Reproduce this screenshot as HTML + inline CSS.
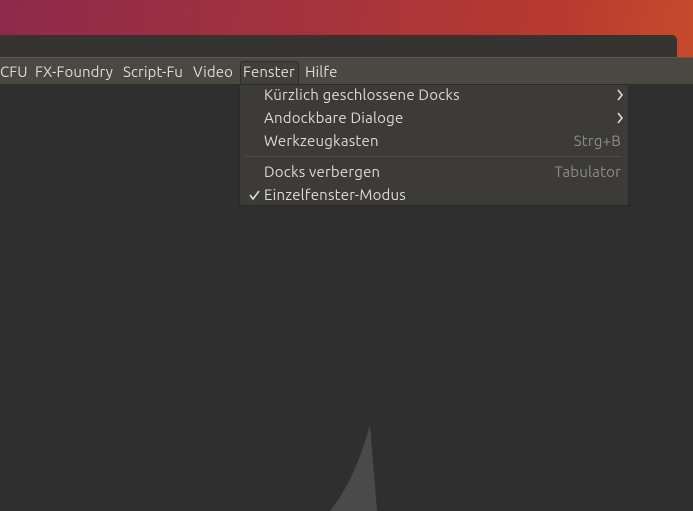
<!DOCTYPE html>
<html><head><style>
body{margin:0;width:693px;height:511px;overflow:hidden;background:#2f2f2f;font-family:"Ubuntu","Liberation Sans",sans-serif;position:relative}
#desk{position:absolute;left:0;top:0;width:693px;height:60px;background:linear-gradient(100deg,#8e2a4c 0%,#a2323f 40%,#b83a30 80%,#c64a2c 100%)}
#title{position:absolute;left:0;top:35px;width:677px;height:25px;background:#353430;border-radius:0 5px 0 0}
#menubar{position:absolute;left:0;top:57px;width:693px;height:27px;background:#4a4841;border-top:1px solid #5a5850;box-sizing:border-box}
.mi{position:absolute;top:5px;font-size:15px;letter-spacing:0.1px;color:#dfdbd2}
#fen{position:absolute;left:240px;top:3px;width:59px;height:23px;background:#403f3a;border:1px solid #2e2d29;border-bottom:none;border-radius:3px 3px 0 0;box-sizing:border-box}
#menu{position:absolute;left:239px;top:84px;width:390px;height:122px;background:#3c3b37;border:1px solid #2a2a27;box-sizing:border-box}
.it{position:absolute;left:24px;font-size:15px;letter-spacing:0.2px;color:#dfdbd2}
.acc{position:absolute;right:7px;font-size:15px;letter-spacing:0.2px;color:#8e8c86}
</style></head><body>
<div id="desk"></div>
<div id="title"></div>
<div id="menubar">
<div id="fen"></div>
<span class="mi" style="left:0">CFU</span>
<span class="mi" style="left:35px">FX-Foundry</span>
<span class="mi" style="left:123px">Script-Fu</span>
<span class="mi" style="left:193px">Video</span>
<span class="mi" style="left:243px">Fenster</span>
<span class="mi" style="left:305px">Hilfe</span>
</div>
<div id="menu">
<span class="it" style="top:1px">Kürzlich geschlossene Docks</span>
<span class="it" style="top:24px">Andockbare Dialoge</span>
<span class="it" style="top:47px">Werkzeugkasten</span><span class="acc" style="top:47px">Strg+B</span>
<div style="position:absolute;left:5px;right:7px;top:71px;height:1px;background:#4d4c47"></div>
<span class="it" style="top:78px">Docks verbergen</span><span class="acc" style="top:78px">Tabulator</span>
<span class="it" style="top:101px">Einzelfenster-Modus</span>
<svg style="position:absolute;left:0;top:0" width="390" height="122" fill="none" stroke="#dfdbd2" stroke-width="1.6">
<path d="M378 5 L382 10 L378 15"/>
<path d="M378 28 L382 33 L378 38"/>
<path d="M10 110 L13 114 L19 106"/>
</svg>
</div>
<svg style="position:absolute;left:0;top:0" width="693" height="511"><path d="M370 425 Q355 480 330 511 L377 511 Z" fill="#4a4a4a"/></svg>
</body></html>
